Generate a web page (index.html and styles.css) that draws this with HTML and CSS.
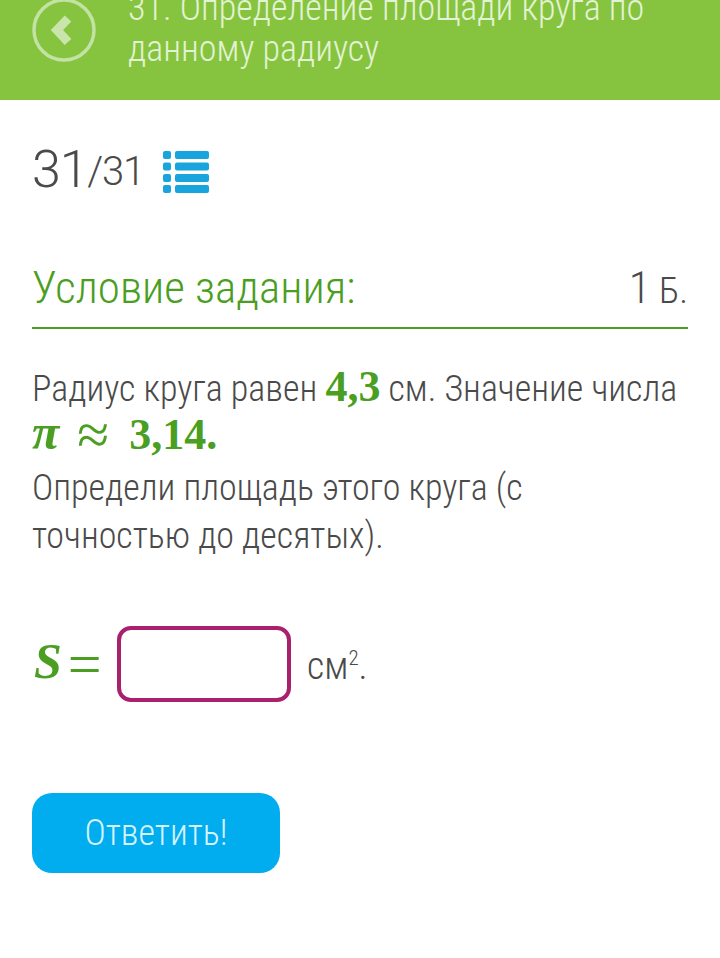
FILE: index.html
```html
<!DOCTYPE html>
<html lang="en">
  <head>
    <meta charset="UTF-8" />
    <meta name="viewport" content="width=device-width, initial-scale=1.0" />
    <title>Определение площади круга</title>
    <link rel="stylesheet" href="styles.css">
  </head>
  <body>
    <header class="header">
      <a class="back-btn" href="#">
        <svg width="64" height="64" viewBox="0 0 64 64">
          <circle cx="32" cy="32" r="30" fill="none" stroke="#c3e2a4" stroke-width="3.5" />
          <path d="M36 20.500 L25 32 L36 44" fill="none" stroke="#c9e5ac" stroke-width="9" />
        </svg>
      </a>
      <h1>31. Определение площади круга по данному радиусу</h1>
    </header>

    <main class="container">
      <div class="counter">
        <span class="counter-now">31</span><span class="counter-total">/31</span>
        <svg class="list-icon" width="46" height="42" viewBox="0 0 46 42">
          <rect x="0" y="0" width="8" height="8" rx="2" />
          <rect x="12" y="0" width="34" height="8" rx="2" />
          <rect x="0" y="11.500" width="8" height="8" rx="2" />
          <rect x="12" y="11.500" width="34" height="8" rx="2" />
          <rect x="0" y="23" width="8" height="8" rx="2" />
          <rect x="12" y="23" width="34" height="8" rx="2" />
          <rect x="0" y="34" width="8" height="8" rx="2" />
          <rect x="12" y="34" width="34" height="8" rx="2" />
        </svg>
      </div>

      <div class="section-head">
        <h2>Условие задания:</h2>
        <span class="points"><span class="points-num">1</span> Б.</span>
      </div>

      <p class="task">
        Радиус круга равен <span class="math">4,3</span> см. Значение числа<br>
        <span class="math"><i class="pi">π</i><span class="approx">≈</span>3,14.</span>
      </p>
      <p class="task task-note">
        Определи площадь этого круга (с<br>
        точностью до десятых).
      </p>

      <div class="answer-row">
        <span class="math-answer"><i>S</i><span class="equals">=</span></span>
        <input class="answer-input" type="text">
        <span class="unit">см<sup>2</sup>.</span>
      </div>

      <button class="submit-btn">Ответить!</button>
    </main>
  </body>
</html>
```

FILE: styles.css
```css
:root {
  --header-green: #86c440;
  --text-green: #4a9e22;
  --text-color: #4a4a4a;
  --blue: #02adef;
}

* {
  margin: 0;
  padding: 0;
  box-sizing: border-box;
}

body {
  font-family: Roboto, "Noto Sans", sans-serif;
  font-weight: 300;
  font-stretch: 85%;
  background-color: #fff;
  color: var(--text-color);
}

.header {
  height: 100px;
  background-color: var(--header-green);
  display: flex;
  align-items: flex-end;
  gap: 32px;
  padding: 0 32px 30px;
  overflow: hidden;
}

.back-btn {
  flex-shrink: 0;
  height: 64px;
  margin-bottom: 8px;
}

.header h1 {
  font-size: 36px;
  font-weight: 300;
  line-height: 41px;
  color: #e3f2d3;
}

.container {
  padding: 0 32px;
}

.counter {
  display: flex;
  align-items: flex-end;
  height: 52px;
  margin-top: 44px;
  font-stretch: 100%;
  letter-spacing: -1.200px;
}

.counter-now {
  font-size: 52px;
  line-height: 52px;
}

.counter-total {
  font-size: 40px;
  line-height: 48px;
}

.list-icon {
  fill: #18a5de;
  margin: 0 0 3px 19px;
}

.section-head {
  display: flex;
  justify-content: space-between;
  align-items: baseline;
  margin-top: 65px;
  padding-bottom: 13px;
  border-bottom: 2px solid var(--text-green);
  color: var(--text-green);
}

.section-head h2 {
  font-size: 45px;
  font-weight: 300;
  line-height: 50px;
}

.points {
  font-size: 37px;
  color: var(--text-color);
}

.points-num {
  font-size: 45px;
}

.task {
  margin-top: 36px;
  font-size: 36px;
  line-height: 48px;
}

.task-note {
  margin-top: 3px;
}

.math {
  font-family: "Liberation Serif", serif;
  font-stretch: normal;
  font-weight: 700;
  font-size: 44px;
  line-height: 0;
  color: var(--text-green);
}

.pi {
  font-size: 50px;
}

.approx {
  margin: 0 20px 0 18px;
  font-size: 58px;
  font-weight: 400;
  vertical-align: -5px;
}

.answer-row {
  display: flex;
  align-items: center;
  margin-top: 66px;
}

.math-answer {
  font-family: "Liberation Serif", serif;
  font-stretch: normal;
  font-size: 50px;
  line-height: 0;
  color: var(--text-green);
  width: 85px;
  padding-left: 2px;
}

.math-answer i {
  font-weight: 700;
  vertical-align: 6px;
}

.equals {
  margin-left: 6px;
  font-size: 60px;
}

.answer-input {
  width: 174px;
  height: 76px;
  border: 4px solid #a9206f;
  border-radius: 14px;
  background: #fff;
}

.unit {
  margin: 3px 0 0 16px;
  font-size: 38px;
}

.unit sup {
  font-size: 21px;
  line-height: 0;
}

.submit-btn {
  display: block;
  width: 248px;
  height: 80px;
  margin-top: 91px;
  background-color: var(--blue);
  border: none;
  border-radius: 20px;
  font-family: Roboto, sans-serif;
  font-weight: 300;
  font-stretch: 85%;
  font-size: 36px;
  color: #d4f3fd;
}
```
